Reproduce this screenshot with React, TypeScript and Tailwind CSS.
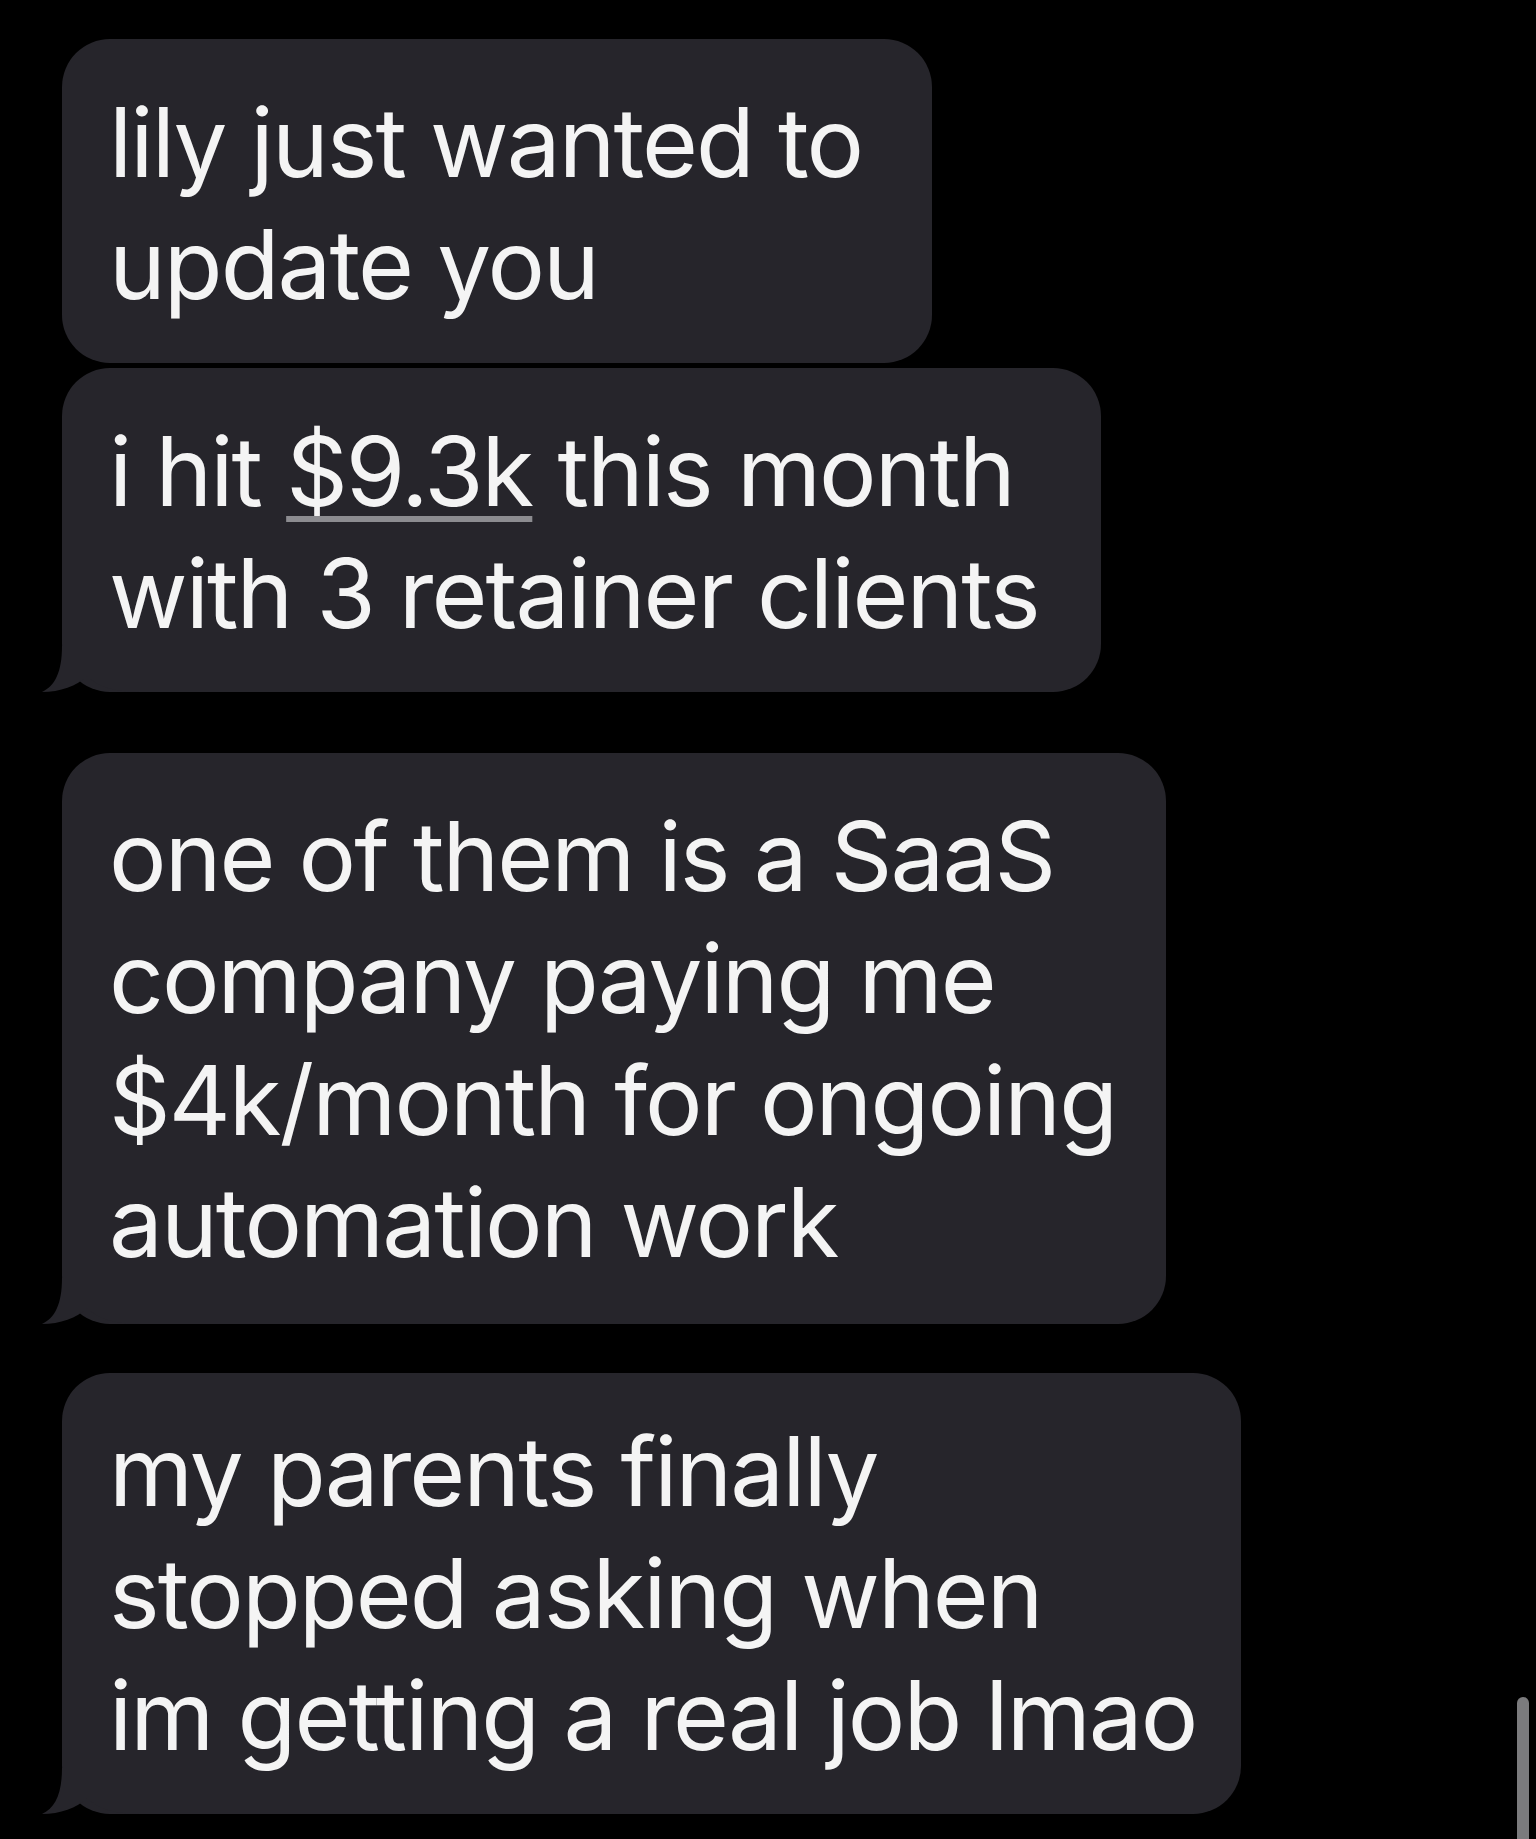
import React from "react";

function Tail() {
    // little curled tail at the bottom-left of a received bubble
    return (
        <svg className="absolute bottom-0 left-[-22px] w-[100px] h-[46px]" viewBox="0 0 100 46" aria-hidden="true">
            <path d="M22 0 C22 26 15 40 2 46 C20 46 37 40 47 30 C58 41 75 46 100 46 L100 0 Z" fill="#26252b" />
        </svg>
    );
}

function Bubble({ children, className, tail }: { children: React.ReactNode; className: string; tail?: boolean }) {
    return (
        <div className={"relative rounded-[48px] bg-[#26252b] pl-[47px] text-[96px] leading-[122px] tracking-[-0.02em] text-[#f4f4f4] whitespace-nowrap " + className}>
            {tail && <Tail />}
            <div className="relative">{children}</div>
        </div>
    );
}

export default function App() {
    return (
        <div className="relative min-h-[1839px] w-full overflow-hidden bg-black pl-[62px] pt-[39px] font-['Inter','Liberation_Sans',sans-serif]">
            <div className="flex flex-col items-start">
                <Bubble className="w-[870px] pt-[42px] pb-[38px]">
                    lily just wanted to<br />update you
                </Bubble>
                <Bubble tail className="mt-[5px] w-[1039px] pt-[42px] pb-[38px]">
                    i hit <span className="underline decoration-[#8c8c90] decoration-[6px] underline-offset-[10px]">$9.3k</span> this month<br />with 3 retainer clients
                </Bubble>
                <Bubble tail className="mt-[61px] w-[1104px] pt-[42px] pb-[41px]">
                    one of them is a SaaS<br />company paying me<br />$4k/month for ongoing<br />automation work
                </Bubble>
                <Bubble tail className="mt-[49px] w-[1179px] pt-[37px] pb-[38px]">
                    my parents finally<br />stopped asking when<br />im getting a real job lmao
                </Bubble>
            </div>
            {/* scroll indicator */}
            <div className="absolute right-[7px] top-[1697px] h-[160px] w-[12px] rounded-full bg-[#7b7b7d]" />
        </div>
    );
}
